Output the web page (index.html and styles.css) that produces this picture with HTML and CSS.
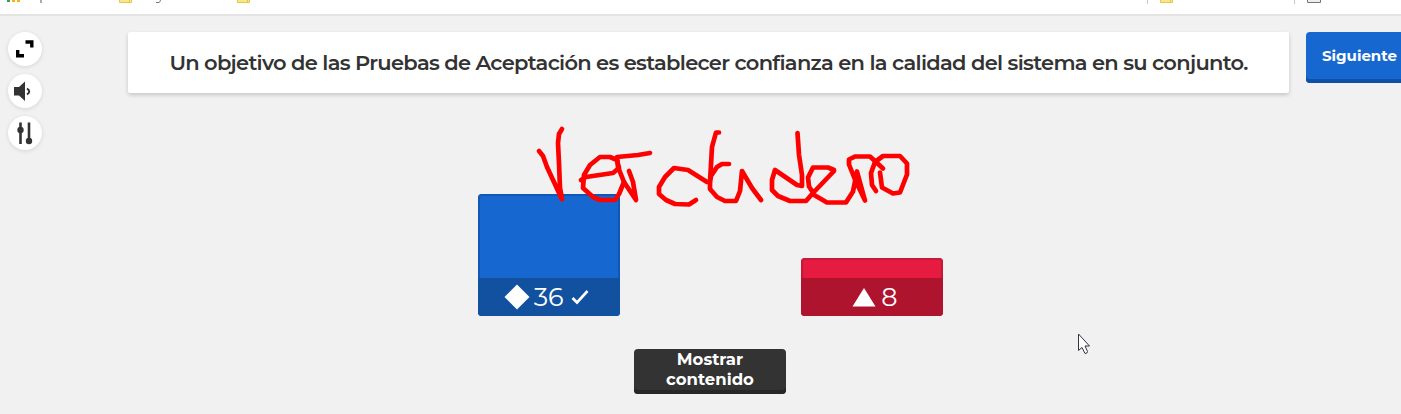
FILE: index.html
```html
<!DOCTYPE html>
<html lang="es">
<head>
<meta charset="utf-8">
<title>Resultados</title>
<link rel="stylesheet" href="styles.css">
</head>
<body>
<svg class="bookmarks" viewBox="0 0 1401 14" aria-hidden="true">
  <path fill="#3b9b62" d="M7 0h3v2H7z"/><path fill="#fbb00f" d="M12 0h3v2h-3zM17 0h3v2h-3z"/>
  <path fill="#b9a4ac" d="M40 0h2v3h-2z"/>
  <g fill="#fbe58c" stroke="#e5c846"><path d="M119.500-1h12v3.500h-12zM129.500-1v3M237.500-1h12v3.500h-12zM247.500-1v3M1160.500-1h12v3.500h-12zM1170.500-1v3"/></g>
  <path fill="none" stroke="#777" d="M156 2.500h3q1.500-.5 1.500-3"/>
  <path stroke="#c8c8c8" d="M1147.500 0v4M1294.500 0v4"/>
  <path fill="#eee" stroke="#747474" d="M1307.500-1v3.500h13V-1"/>
</svg>
<main class="stage">
  <nav class="tools">
    <button class="tool"><svg viewBox="0 0 34 34"><path fill="none" stroke="#000" stroke-width="3.400" d="M17.500 10h6.300v5.500M9.700 18v5.800H16"/></svg></button>
    <button class="tool"><svg viewBox="0 0 34 34"><path fill="#333" d="M6 13h5l6-5.500v19.500l-6-5.500H6z"/><path fill="none" stroke="#333" stroke-width="2" d="M19 14.500q4.500 3 0 6"/></svg></button>
    <button class="tool"><svg viewBox="0 0 34 34"><path stroke="#333" stroke-width="2.600" d="M12.500 6.500v21.500M21 6.500v20"/><circle cx="12.500" cy="14" r="3.200" fill="#333"/><circle cx="21" cy="25" r="3.200" fill="#333"/></svg></button>
  </nav>
  <section class="content">
    <h1 class="question"><span>Un objetivo de las Pruebas de Aceptación es establecer confianza en la calidad del sistema en su conjunto.</span></h1>
    <div class="chart">
      <div class="bar bar-true"><div class="bar-label">
        <svg width="26" height="26" viewBox="0 0 26 26"><path fill="#fff" d="M13 .5 25.500 13 13 25.500.5 13z"/></svg>
        <span class="count">36</span>
        <svg class="check" width="18" height="16" viewBox="0 0 18 16"><path fill="none" stroke="#fff" stroke-width="2.600" d="m1.500 9 4.500 4.500L16.500 2"/></svg>
      </div></div>
      <div class="bar bar-false"><div class="bar-label">
        <svg width="24" height="20" viewBox="0 0 24 20"><path fill="#fff" d="m12 1 11.500 18.500H.5z"/></svg>
        <span class="count">8</span>
      </div></div>
    </div>
    <div class="show" role="button"><span>Mostrar</span><span>contenido</span></div>
  </section>
  <div class="next" role="button"><span>Siguiente</span></div>
</main>
<svg class="ink" viewBox="0 0 1401 414" aria-hidden="true">
  <g fill="none" stroke="#f00" stroke-width="4.700" stroke-linecap="round" stroke-linejoin="round">
    <path d="M539 151l4 5 4 11 6 13 9 19-2-11-1-25-1-20 1-9 3-5"/>
    <path d="M562 199l-5-11"/>
    <path d="M581 180l5-3 27-4 6-5-2-8-7-3h-10l-10 8-6 10-1 13 10 9 7 3h15l4-6 5-12"/>
    <path d="M650 153l-12 2-21 2 1 10 6 15 12 18-3-18-4-11"/>
    <path d="M696 200l-7 4.500-14-.5-9-4-7-6v-7l6-10 9-9 14 2 19 12h3"/>
    <path d="M719 132.500h-3l-4 14.500-2 35v7l7 8 8 4h11l4-10 2-20 10 17 9 12M729 164h-7l-5 3-6 9-1 6"/>
    <path d="M797.500 133l1.500 22 3 20v11l-5-1-22-15-3 10v10l6 6 12 5h16l7-8 21-22v-1l-6-2.500h-15l-5 10 1 9 6 9 12 7h19l7-11 4-20 8 29-10-21-6-15v-5l6-3h15l13 12"/>
    <path d="M876 191l-4-6-1-12 4-11 8-6h17l7 7.500v11l-7 18-7 1-11-6-2-15"/>
  </g>
</svg>
<svg class="pointer" width="14" height="22" viewBox="0 0 14 22"><path fill="#fff" stroke="#333344" d="M1.500 1v16.500l3.500-3 3 6q2.500 0 2.500-2L8 13h4.500z"/></svg>
</body>
</html>
```
FILE: styles.css
```css
* { box-sizing: border-box; }
body {
  margin: 0;
  height: 414px;
  overflow: hidden;
  background: #f1f1f1;
  color: #333;
  font-family: Montserrat, Inter, sans-serif;
}
button { border: 0; padding: 0; font: inherit; }
.bookmarks { display: block; width: 1401px; height: 14px; background: #fff; }
.stage {
  display: grid;
  grid-template-columns: 128px 1161px 130px;
  border-top: 2px solid #e4e4e4;
  height: 400px;
}
.tools { display: flex; flex-direction: column; gap: 8px; padding: 16px 0 0 8px; }
.tool {
  width: 34px;
  height: 34px;
  border-radius: 50%;
  background: #fff;
  box-shadow: 0 1px 4px rgba(0, 0, 0, .12);
}
.tool svg { display: block; width: 34px; height: 34px; }
.content { display: flex; flex-direction: column; padding-top: 16px; }
.question {
  display: flex;
  align-items: center;
  justify-content: center;
  width: 1161px;
  height: 61px;
  margin: 0;
  border-radius: 2px;
  background: #fff;
  box-shadow: 0 2px 4px rgba(0, 0, 0, .18);
  font-size: 21px;
  font-weight: 600;
  letter-spacing: -.69px;
  white-space: nowrap;
}
.chart {
  display: flex;
  align-items: flex-end;
  gap: 181px;
  height: 223px;
  padding-left: 349.500px;
}
.bar {
  display: flex;
  flex-direction: column;
  justify-content: flex-end;
  width: 142.200px;
  border-radius: 4px;
  overflow: hidden;
}
.bar-true { height: 122px; background: #1668d0; box-shadow: inset 0 0 0 2px #1058b8; }
.bar-false { height: 58px; background: #e51b3f; box-shadow: inset 0 0 0 2px #c81838; }
.bar-label {
  display: flex;
  align-items: center;
  justify-content: center;
  gap: 4px;
  height: 38px;
  padding-right: 5px;
  color: #fff;
}
.bar-true .bar-label { background: #12519f; }
.bar-false .bar-label { background: #af142f; gap: 5px; padding: 0 0 0 6px; }
.count { font-size: 25.500px; line-height: 36px; }
.check { margin-left: 3px; }
.show {
  display: flex;
  flex-direction: column;
  align-items: center;
  width: 152px;
  height: 45px;
  margin: 33px 0 0 506px;
  border-radius: 4px;
  background: #333;
  box-shadow: inset 0 -4px #272727;
  color: #fff;
  font-size: 16.500px;
  font-weight: 700;
  line-height: 20px;
}
.next {
  height: 51px;
  margin: 16px 0 0 17px;
  padding: 0 0 4px 16px;
  border-radius: 4px;
  background: #1668d0;
  box-shadow: inset 0 -4px #0f4fa5;
  color: #fff;
  font-size: 15px;
  font-weight: 700;
  line-height: 47px;
}
.ink { position: absolute; top: 0; left: 0; width: 1401px; height: 414px; pointer-events: none; }
.pointer { position: absolute; top: 333px; left: 1077px; }
```
